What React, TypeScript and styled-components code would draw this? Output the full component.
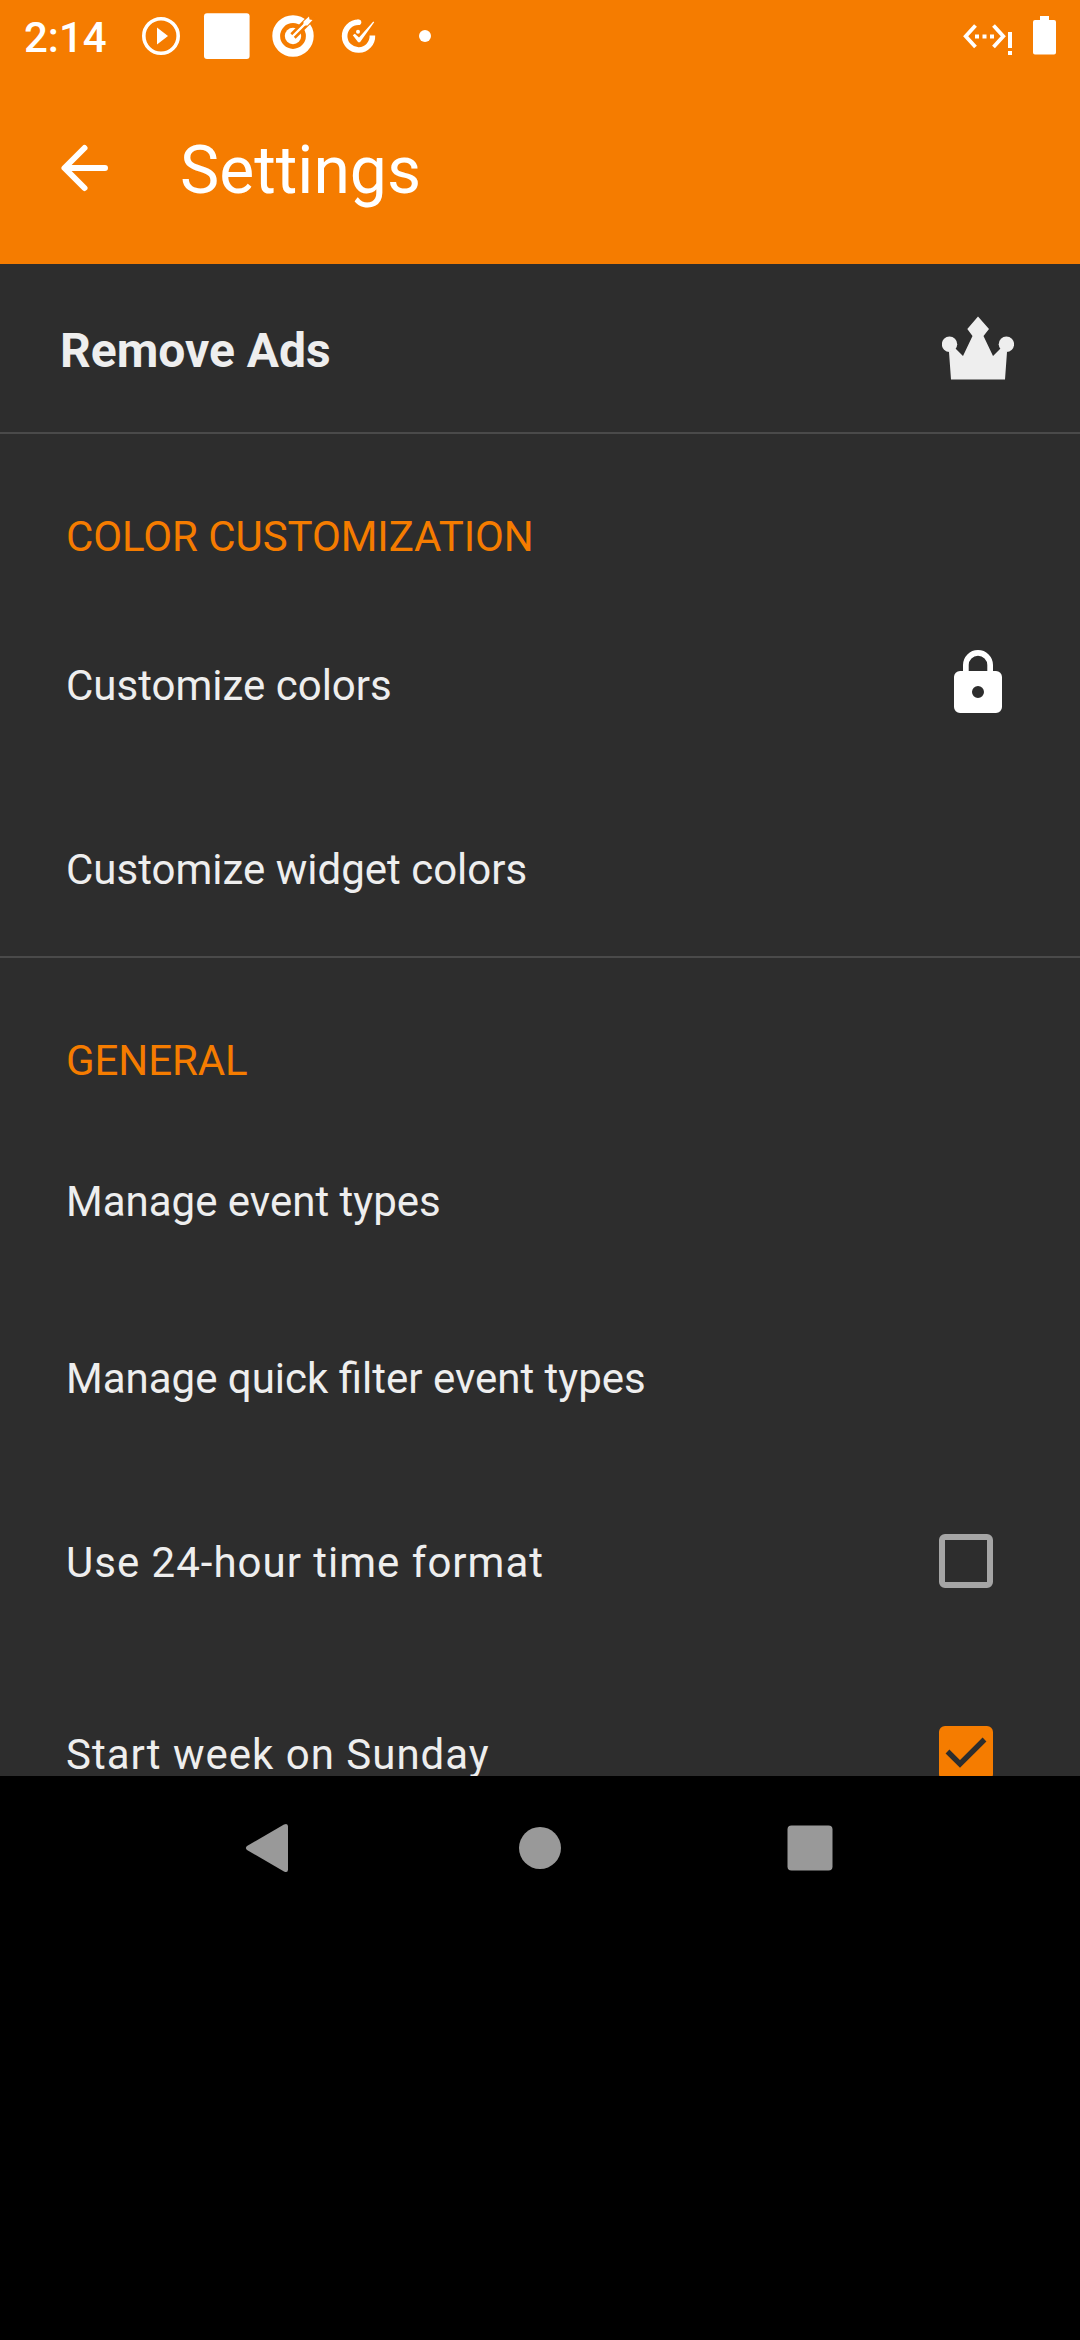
import React from "react";
import styled, { createGlobalStyle } from "styled-components";

const accent = "#f57c00";

const GlobalStyle = createGlobalStyle`
  html, body { margin: 0; padding: 0; background: #000; }
  * { box-sizing: border-box; }
`;

const Screen = styled.div`
  width: 1080px;
  height: 2340px;
  display: flex;
  flex-direction: column;
  overflow: hidden;
  background: #000;
  font-family: Roboto, "Liberation Sans", sans-serif;
`;

const StatusBar = styled.div`
  flex: none;
  height: 72px;
  display: flex;
  align-items: center;
  justify-content: space-between;
  padding: 0 23px 0 24px;
  background: ${accent};
  color: #fff;
`;

const Clock = styled.span`
  width: 104px;
  padding-top: 3px;
  font-size: 42px;
  line-height: 50px;
  font-weight: 500;
`;

const StatusGroup = styled.div`
  display: flex;
  align-items: center;
`;

const StatusIcon = styled.svg<{ $w?: number }>`
  display: block;
  width: ${(p) => p.$w ?? 66}px;
  height: 72px;
`;

const AppBar = styled.header`
  flex: none;
  height: 192px;
  display: flex;
  align-items: center;
  gap: 72px;
  padding: 0 48px;
  background: ${accent};
  color: #fff;
`;

const BackIcon = styled.svg`
  width: 60px;
  height: 192px;
`;

const Title = styled.h1`
  margin: 0;
  padding-top: 6px;
  font-size: 66px;
  line-height: 78px;
  font-weight: 400;
`;

const SettingsList = styled.main`
  flex: none;
  height: 1512px;
  overflow: hidden;
  background: #2d2d2d;
  color: #eee;
`;

const Row = styled.div<{ $height: number }>`
  height: ${(p) => p.$height}px;
  display: flex;
  align-items: center;
  justify-content: space-between;
  padding: 0 66px;
`;

const Label = styled.span<{ $shift?: number; $tracked?: boolean }>`
  padding-top: ${(p) => p.$shift ?? 0}px;
  font-size: 42px;
  line-height: 50px;
  letter-spacing: ${(p) => (p.$tracked ? "1px" : "normal")};
  white-space: nowrap;
`;

const AdsRow = styled(Row)`
  padding-left: 60px;
`;

const AdsLabel = styled.span`
  padding-top: 5px;
  font-size: 48px;
  line-height: 56px;
  font-weight: 700;
`;

const SectionTitle = styled.h2`
  margin: 0;
  height: 155px;
  display: flex;
  align-items: center;
  padding: 50px 66px 0;
  color: ${accent};
  font-size: 42px;
  line-height: 50px;
  font-weight: 400;
  letter-spacing: -0.08px;
  text-transform: uppercase;
`;

const Divider = styled.div`
  height: 2px;
  background: #4a4a4a;
`;

const RowIcon = styled.svg`
  display: block;
  width: 72px;
  height: 72px;
`;

const Checkbox = styled.span<{ $checked?: boolean }>`
  width: 54px;
  height: 54px;
  margin-right: 21px;
  border: 6px solid ${(p) => (p.$checked ? accent : "#a5a5a5")};
  border-radius: 6px;
  background: ${(p) => (p.$checked ? accent : "transparent")};
`;

const CheckMark = styled.svg`
  display: block;
  width: 42px;
  height: 42px;
`;

const NavBar = styled.nav`
  flex: none;
  height: 144px;
  display: flex;
  justify-content: center;
  gap: 126px;
  background: #000;
`;

const NavIcon = styled.svg`
  width: 144px;
  height: 144px;
  fill: #999;
`;

function StatusIcons() {
  return (
    <StatusGroup>
      <Clock>2:14</Clock>
      <StatusIcon viewBox="128 0 66 72">
        <circle cx="161" cy="36" r="17.2" fill="none" stroke="#fff" strokeWidth="3.6" />
        <path d="M157 27.5v17l11-8.5z" fill="#fff" />
      </StatusIcon>
      <StatusIcon viewBox="194 0 66 72">
        <rect x="204" y="13.3" width="45.6" height="45.6" rx="3" fill="#fff" />
      </StatusIcon>
      <StatusIcon viewBox="260 0 66 72">
        <circle cx="293" cy="36" r="16.8" fill="none" stroke="#fff" strokeWidth="7.800" />
        <circle cx="293" cy="36" r="8.200" fill="#fff" />
        <path d="M293 36L313 16" stroke={accent} strokeWidth="7.500" />
        <path d="M292.500 36.500L306 23" stroke="#fff" strokeWidth="2.400" strokeLinecap="round" />
        <path d="M303.500 25.500V21.500L309 16.500L309.500 19.500L312.500 20L307.500 25.500z" fill="#fff" />
      </StatusIcon>
      <StatusIcon viewBox="326 0 66 72">
        <path d="M358.500 22.200A13.900 13.900 0 1 0 372.400 35.500" fill="none" stroke="#fff" strokeWidth="5.600" />
        <circle cx="358.500" cy="22.200" r="2.800" fill="#fff" />
        <path d="M352.800 35.200L354.800 33.800L359 37.500L373.300 21.600L374.200 22.300L360 42.200H358.200z" fill="#fff" />
        <circle cx="358" cy="31.700" r="2" fill="#fff" />
      </StatusIcon>
      <StatusIcon viewBox="392 0 66 72">
        <circle cx="425" cy="36" r="6" fill="#fff" />
      </StatusIcon>
    </StatusGroup>
  );
}

export default function App() {
  return (
    <>
      <GlobalStyle />
      <Screen>
        <StatusBar>
          <StatusIcons />
          <StatusGroup>
            <StatusIcon $w={63} viewBox="960 0 63 72">
              <path d="M975.500 25.500L965.700 36.300L975.500 47M993.500 25.500L1003.300 36.300L993.500 47" fill="none" stroke="#fff" strokeWidth="3.800" />
              <path d="M975 34.500h4v4h-4zM982.500 34.500h4v4h-4zM990 34.500h4v4h-4zM1008 32h4v16h-4zM1008 51h4v4h-4z" fill="#fff" />
            </StatusIcon>
            <StatusIcon $w={34} viewBox="1023 0 34 72">
              <path d="M1040 16h9v4h5a2 2 0 0 1 2 2v30.500a2 2 0 0 1-2 2h-19a2 2 0 0 1-2-2v-30.500a2 2 0 0 1 2-2h5z" fill="#fff" />
            </StatusIcon>
          </StatusGroup>
        </StatusBar>
        <AppBar>
          <BackIcon viewBox="48 72 60 192">
            <path d="M105 168H65M84.500 148L64.500 168L84.500 188" fill="none" stroke="#fff" strokeWidth="6" strokeLinecap="round" strokeLinejoin="round" />
          </BackIcon>
          <Title>Settings</Title>
        </AppBar>
        <SettingsList>
          <AdsRow $height={168}>
            <AdsLabel>Remove Ads</AdsLabel>
            <RowIcon viewBox="942 312 72 72" fill="#eee">
              <path d="M978 316.500L989 329L983.500 336L993 356L1000.500 348.500L1007 352L1005 379.500H951L949 352L955.500 348.500L963 356L972.500 336L967.300 329z" />
              <circle cx="949.500" cy="344.300" r="7.700" />
              <circle cx="1006.400" cy="344.300" r="7.700" />
            </RowIcon>
          </AdsRow>
          <Divider />
          <SectionTitle>Color customization</SectionTitle>
          <Row $height={188}>
            <Label $shift={5}>Customize colors</Label>
            <RowIcon viewBox="0 0 24 24" fill="#fff">
              <path d="M18 8h-1V6A5 5 0 0 0 7 6v2H6a2 2 0 0 0-2 2v10a2 2 0 0 0 2 2h12a2 2 0 0 0 2-2V10a2 2 0 0 0-2-2zM12 17a2 2 0 1 1 0-4 2 2 0 0 1 0 4zM15.100 8H8.900V6a3.100 3.100 0 0 1 6.200 0z" />
            </RowIcon>
          </Row>
          <Row $height={179}>
            <Label $shift={6}>Customize widget colors</Label>
          </Row>
          <Divider />
          <SectionTitle>General</SectionTitle>
          <Row $height={177}>
            <Label>Manage event types</Label>
          </Row>
          <Row $height={175}>
            <Label $shift={2}>Manage quick filter event types</Label>
          </Row>
          <Row $height={192}>
            <Label $shift={3} $tracked>Use 24-hour time format</Label>
            <Checkbox />
          </Row>
          <Row $height={192}>
            <Label $shift={3} $tracked>Start week on Sunday</Label>
            <Checkbox $checked>
              <CheckMark viewBox="945 1732 42 42">
                <path d="M947.500 1751.500L960 1764L984.500 1739.500" fill="none" stroke="#2d2d2d" strokeWidth="5.400" />
              </CheckMark>
            </Checkbox>
          </Row>
        </SettingsList>
        <NavBar>
          <NavIcon viewBox="198 1776 144 144">
            <path d="M247 1846L284 1824.500Q288 1822.800 288 1826.500V1869.500Q288 1873.200 284 1871.500L247 1850Q244.800 1848 247 1846z" />
          </NavIcon>
          <NavIcon viewBox="468 1776 144 144">
            <circle cx="540" cy="1848" r="21" />
          </NavIcon>
          <NavIcon viewBox="738 1776 144 144">
            <rect x="787.500" y="1825.500" width="45" height="45" rx="4" />
          </NavIcon>
        </NavBar>
      </Screen>
    </>
  );
}
